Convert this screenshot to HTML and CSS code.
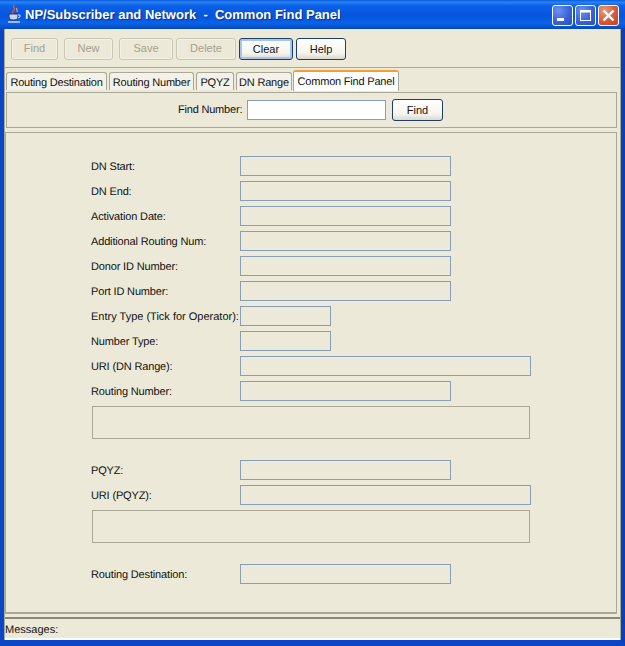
FILE: index.html
```html
<!DOCTYPE html>
<html lang="en">
<head>
<meta charset="utf-8">
<title>NP/Subscriber and Network - Common Find Panel</title>
<link rel="stylesheet" href="styles.css">
</head>
<body>
<div class="window">
  <header class="titlebar">
    <svg class="app-icon" width="16" height="20" viewBox="0 0 16 20">
      <path d="M8 1c-2 2 2 3 0 5s-2 2-1 4" stroke="#e2552a" stroke-width="1.500" fill="none"/>
      <path d="M11 4c-1.500 1.500 1 2 0 4" stroke="#e8a060" stroke-width="1.200" fill="none"/>
      <path d="M3 10h9v3c0 2-2 3-4.500 3S3 15 3 13z" fill="#cfd3ea" stroke="#2b3478"/>
      <path d="M12 11h2v2l-2 1" stroke="#dfe4f4" fill="none"/>
      <path d="M2 18h12" stroke="#cfd6f0" stroke-width="1.500" fill="none"/>
    </svg>
    <span class="title-text">NP/Subscriber and Network&nbsp; -&nbsp; Common Find Panel</span>
    <div class="win-buttons">
      <div class="win-btn">
        <svg width="21" height="21" viewBox="0 0 21 21"><rect x="5" y="13" width="7" height="3" fill="#fff"/></svg>
      </div>
      <div class="win-btn">
        <svg width="21" height="21" viewBox="0 0 21 21"><rect x="5.500" y="5.500" width="10" height="10" fill="none" stroke="#fff"/><rect x="5" y="5" width="11" height="2.500" fill="#fff"/></svg>
      </div>
      <div class="win-btn close">
        <svg width="21" height="21" viewBox="0 0 21 21"><path d="M5.500 5.500l10 10M15.500 5.500l-10 10" stroke="#fff" stroke-width="2.400"/></svg>
      </div>
    </div>
  </header>

  <div class="client">
    <div class="toolbar">
      <button class="btn disabled w47">Find</button>
      <button class="btn disabled w49 gap6">New</button>
      <button class="btn disabled w54 gap6">Save</button>
      <button class="btn disabled w60 gap3">Delete</button>
      <button class="btn focus w54 gap3">Clear</button>
      <button class="btn w50 gap3">Help</button>
    </div>

    <nav class="tabs">
      <div class="tab t1">Routing Destination</div>
      <div class="tab t2">Routing Number</div>
      <div class="tab t3">PQYZ</div>
      <div class="tab t4">DN Range</div>
      <div class="tab active">Common Find Panel</div>
    </nav>

    <section class="find-panel">
      <label class="find-label">Find Number:</label>
      <div class="find-input"></div>
      <button class="btn find-btn">Find</button>
    </section>

    <section class="form-panel">
      <div class="row"><span class="lbl">DN Start:</span><div class="field"></div></div>
      <div class="row"><span class="lbl">DN End:</span><div class="field"></div></div>
      <div class="row"><span class="lbl">Activation Date:</span><div class="field"></div></div>
      <div class="row"><span class="lbl">Additional Routing Num:</span><div class="field"></div></div>
      <div class="row"><span class="lbl">Donor ID Number:</span><div class="field"></div></div>
      <div class="row"><span class="lbl">Port ID Number:</span><div class="field"></div></div>
      <div class="row"><span class="lbl lbl-entry">Entry Type (Tick for Operator):</span><div class="field small"></div></div>
      <div class="row"><span class="lbl">Number Type:</span><div class="field small"></div></div>
      <div class="row"><span class="lbl">URI (DN Range):</span><div class="field wide"></div></div>
      <div class="row"><span class="lbl">Routing Number:</span><div class="field"></div></div>
      <div class="box box1"></div>
      <div class="row"><span class="lbl">PQYZ:</span><div class="field"></div></div>
      <div class="row"><span class="lbl">URI (PQYZ):</span><div class="field wide"></div></div>
      <div class="box box2"></div>
      <div class="row"><span class="lbl">Routing Destination:</span><div class="field"></div></div>
    </section>

    <footer class="messages">Messages:</footer>
  </div>
</div>
</body>
</html>
```

FILE: styles.css
```css
* { box-sizing: border-box; }
html, body { margin: 0; padding: 0; overflow: hidden; }
body {
  width: 625px;
  height: 646px;
  font-family: "Liberation Sans", Arial, sans-serif;
  font-size: 11px;
  text-rendering: geometricPrecision;
  color: #111;
  background: #ece9d8;
}
.window {
  width: 625px;
  height: 646px;
  display: flex;
  flex-direction: column;
  background: #0a4fd6;
  border-left: 4px solid #0a47c8;
  border-right: 4px solid #0a3fbc;
  border-bottom: 6px solid #0a47c8;
}
.titlebar {
  height: 29px;
  margin: 0 -4px;
  padding: 0 6px 0 5px;
  display: flex;
  align-items: center;
  color: #fff;
  background: linear-gradient(180deg, #0a5be0 0%, #2a83f2 8%, #0a5fe8 20%, #0655dd 55%, #0a62ea 80%, #0649b8 100%);
}
.app-icon { margin-left: 1px; margin-top: -2px; flex: none; }
.title-text {
  margin-left: 3px;
  font: bold 13px "Liberation Sans", Arial, sans-serif;
  white-space: nowrap;
  text-shadow: 1px 1px 1px #0a2f8c;
}
.win-buttons { margin-left: auto; margin-top: 2px; display: flex; gap: 2px; }
.win-btn {
  width: 21px;
  height: 21px;
  border: 1px solid #fff;
  border-radius: 3px;
  background: radial-gradient(circle at 30% 25%, #6d92ee 0%, #3a63d8 55%, #2a4cc0 100%);
  display: flex;
  align-items: center;
  justify-content: center;
}
.win-btn svg { flex: none; margin: -1px; }
.win-btn.close { background: radial-gradient(circle at 30% 25%, #ec9a7c 0%, #d9583a 55%, #c2401f 100%); }

.client {
  flex: 1;
  min-height: 0;
  display: flex;
  flex-direction: column;
  background: #ece9d8;
  border-left: 1px solid #a9a796;
  border-right: 1px solid #a9a796;
}
.toolbar {
  height: 39px;
  padding: 9px 0 0 6px;
  display: flex;
  align-items: flex-start;
  border-bottom: 1px solid #aca899;
}
.btn {
  height: 22px;
  padding: 0;
  font: 11px "Liberation Sans", Arial, sans-serif;
  color: #111;
  border: 1px solid #1c3f66;
  border-radius: 3px;
  background: linear-gradient(180deg, #ffffff 0%, #f6f5ef 70%, #dcd8cc 100%);
}
.btn.disabled {
  padding-bottom: 2px;
  color: #a3a08f;
  border-color: #c9c6b6;
  background: #ece9d8;
  box-shadow: inset 0 0 0 1px #f3f1e6;
}
.btn.focus { box-shadow: inset 0 0 0 2px #a9c4ee; }
.w47 { width: 47px; }
.w49 { width: 49px; }
.w54 { width: 54px; }
.w60 { width: 60px; }
.w50 { width: 50px; }
.gap6 { margin-left: 6px; }
.gap3 { margin-left: 3px; }

.tabs {
  height: 24px;
  padding: 2px 0 0 1px;
  display: flex;
  align-items: flex-start;
  letter-spacing: -0.2px;
}
.tab {
  height: 18px;
  margin-top: 2px;
  margin-right: 2px;
  padding-top: 3px;
  display: flex;
  align-items: center;
  justify-content: center;
  background: #f4f2e8;
  border: 1px solid #a9a796;
  border-bottom: 0;
  border-radius: 3px 3px 0 0;
  white-space: nowrap;
}
.t1 { width: 101px; }
.t2 { width: 85px; }
.t3 { width: 38px; }
.t4 { width: 56px; margin-right: 1px; }
.tab.active {
  width: 106px;
  height: 21px;
  margin-top: 0;
  margin-right: 0;
  background: #fff;
  border-top: 2px solid #f0a030;
  padding: 0;
}
.find-panel {
  height: 36px;
  margin: 0 3px 0 1px;
  padding-left: 171px;
  display: flex;
  align-items: center;
  border: 1px solid #a9a796;
}
.find-label { width: 69px; flex: none; letter-spacing: -0.2px; }
.find-input {
  width: 139px;
  height: 20px;
  background: #fff;
  border: 1px solid #869eb6;
}
.find-btn { width: 51px; margin-left: 6px; }
.form-panel {
  height: 482px;
  margin: 4px 3px 0 0;
  padding: 23px 0 0 85px;
  border: 1px solid #a9a796;
  border-bottom: 2px solid #a9a796;
}
.row {
  display: flex;
  align-items: center;
  height: 20px;
  margin-bottom: 5px;
}
.lbl {
  width: 149px;
  flex: none;
  padding-top: 2px;
  white-space: nowrap;
  letter-spacing: -0.15px;
}
.lbl-entry { letter-spacing: 0; }
.field {
  width: 211px;
  height: 20px;
  border: 1px solid #869eb6;
}
.field.small { width: 91px; }
.field.wide { width: 291px; }
.box {
  width: 438px;
  height: 33px;
  margin-left: 1px;
  border: 1px solid #a9a796;
}
.box1 { margin-bottom: 21px; }
.box2 { margin-bottom: 21px; }
.messages {
  flex: 1;
  margin-top: 3px;
  padding: 5px 0 0 0;
  border-top: 2px solid #8a8878;
  border-bottom: 2px solid #fff;
}
```
